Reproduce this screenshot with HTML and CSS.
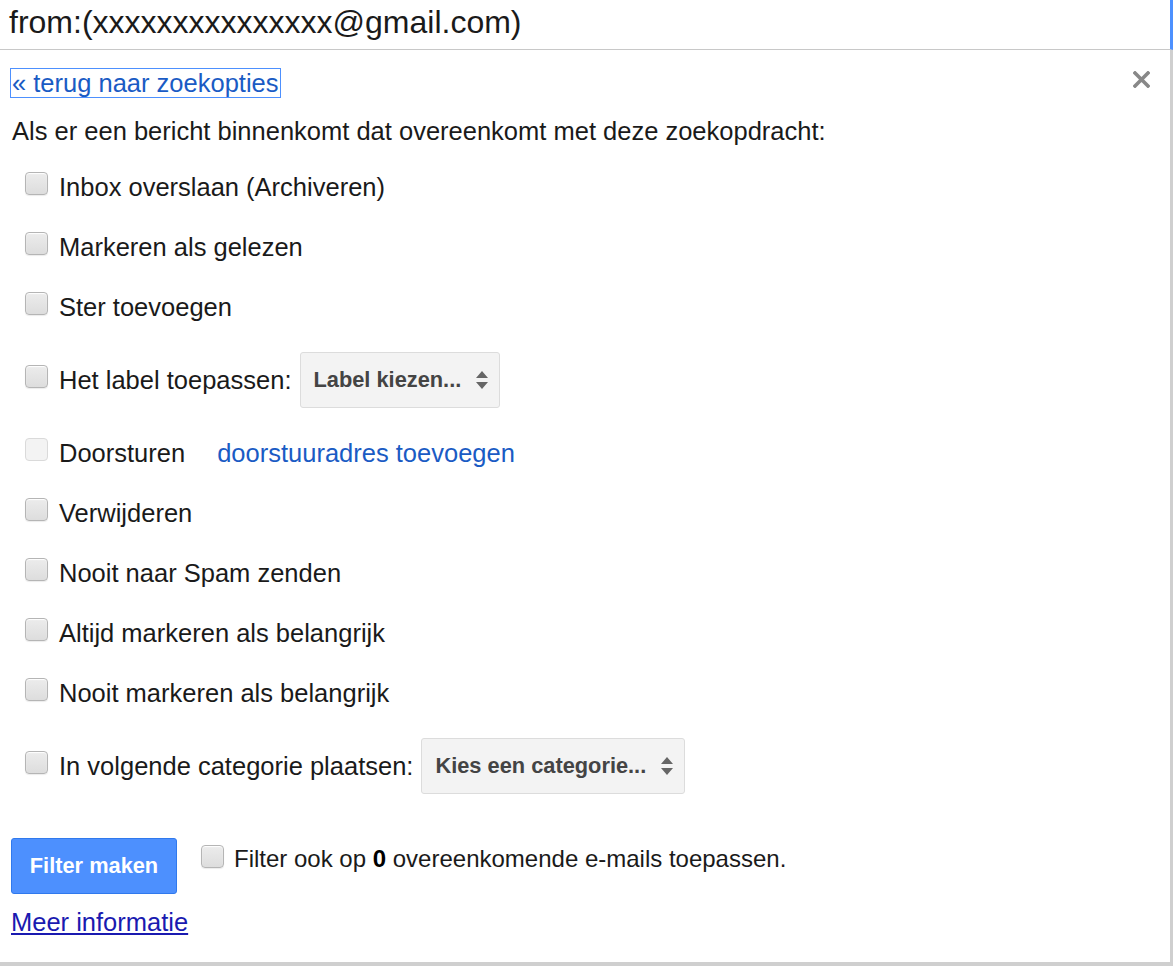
FILE: index.html
```html
<!DOCTYPE html>
<html lang="nl">
<head>
<meta charset="utf-8">
<title>Filter maken</title>
<link rel="stylesheet" href="styles.css">
</head>
<body>
<div class="page">
  <div class="search">from:(xxxxxxxxxxxxxxx@gmail.com)</div>
  <div class="panel">
    <div class="top">
      <a class="back" href="#">« terug naar zoekopties</a>
      <svg class="close" width="17" height="17" viewBox="0 0 17 17" aria-label="Sluiten">
        <path d="M2 2 L15 15 M15 2 L2 15" stroke="#888" stroke-width="3.6" stroke-linecap="square"/>
      </svg>
    </div>
    <p class="intro">Als er een bericht binnenkomt dat overeenkomt met deze zoekopdracht:</p>
    <ul class="options">
      <li class="opt"><span class="cb"></span><span class="lbl">Inbox overslaan (Archiveren)</span></li>
      <li class="opt"><span class="cb"></span><span class="lbl">Markeren als gelezen</span></li>
      <li class="opt"><span class="cb"></span><span class="lbl">Ster toevoegen</span></li>
      <li class="opt tall"><span class="cb"></span><span class="lbl">Het label toepassen:</span>
        <span class="select label-select"><span>Label kiezen...</span>
          <svg class="arrows" width="14" height="20" viewBox="0 0 14 20"><path d="M7 1 L13 8 L1 8 Z M1 12 L13 12 L7 19 Z" fill="#666"/></svg>
        </span>
      </li>
      <li class="opt"><span class="cb disabled"></span><span class="lbl">Doorsturen</span><a class="fwd" href="#">doorstuuradres toevoegen</a></li>
      <li class="opt"><span class="cb"></span><span class="lbl">Verwijderen</span></li>
      <li class="opt"><span class="cb"></span><span class="lbl">Nooit naar Spam zenden</span></li>
      <li class="opt"><span class="cb"></span><span class="lbl">Altijd markeren als belangrijk</span></li>
      <li class="opt"><span class="cb"></span><span class="lbl">Nooit markeren als belangrijk</span></li>
      <li class="opt tall"><span class="cb"></span><span class="lbl">In volgende categorie plaatsen:</span>
        <span class="select cat-select"><span>Kies een categorie...</span>
          <svg class="arrows" width="14" height="20" viewBox="0 0 14 20"><path d="M7 1 L13 8 L1 8 Z M1 12 L13 12 L7 19 Z" fill="#666"/></svg>
        </span>
      </li>
    </ul>
    <div class="actions">
      <button class="btn">Filter maken</button>
      <span class="cb small"></span>
      <span class="apply">Filter ook op <b>0</b> overeenkomende e-mails toepassen.</span>
    </div>
    <a class="more" href="#">Meer informatie</a>
  </div>
</div>
</body>
</html>
```

FILE: styles.css
```css
html, body {
  margin: 0;
  padding: 0;
  background: #fff;
}

.page {
  width: 1173px;
  height: 966px;
  display: flex;
  flex-direction: column;
  font-family: "Liberation Sans", Arial, sans-serif;
  color: #1a1a1a;
}

.search {
  box-sizing: border-box;
  height: 50px;
  border-bottom: 1px solid #c8c8c8;
  border-right: 3px solid #4d90fe;
  padding-left: 9px;
  font-size: 32px;
  line-height: 44px;
  color: #1a1a1a;
}

.panel {
  flex: 1;
  box-sizing: border-box;
  border-right: 3px solid #cfcfcf;
  border-bottom: 4px solid #cfcfcf;
  padding: 18px 20px 0 10px;
  display: flex;
  flex-direction: column;
  align-items: flex-start;
}

.top {
  align-self: stretch;
  display: flex;
  justify-content: space-between;
  align-items: flex-start;
}

.back {
  font-size: 25.5px;
  line-height: 28px;
  color: #1a5bc4;
  text-decoration: none;
  border: 1px solid #4d90fe;
  padding: 0 1px;
}

.close {
  margin-top: 3px;
}

.intro {
  margin: 18px 0 0 2px;
  font-size: 25.5px;
  line-height: 30px;
}

.options {
  list-style: none;
  margin: 11px 0 0 0;
  padding: 0 0 0 15px;
}

.opt {
  height: 60px;
  display: flex;
  align-items: center;
}

.opt.tall {
  height: 86px;
}

.cb {
  box-sizing: border-box;
  width: 23px;
  height: 23px;
  border: 1px solid #b5b5b5;
  border-radius: 4px;
  background: linear-gradient(#ececec, #dddddd);
  box-shadow: inset 0 1px 1px #fff, 0 1px 1px rgba(0,0,0,0.08);
  margin: 0 11px 8px 0;
  flex: none;
}

.cb.disabled {
  border-color: #dadada;
  background: #f3f3f3;
  box-shadow: none;
}

.lbl {
  font-size: 25.5px;
  line-height: 30px;
}

.select {
  box-sizing: border-box;
  height: 56px;
  display: inline-flex;
  align-items: center;
  justify-content: space-between;
  background: #f3f3f3;
  border: 1px solid #dcdcdc;
  border-radius: 3px;
  padding: 0 10px 0 13px;
  font-size: 21.8px;
  font-weight: bold;
  color: #444;
  margin-left: 8px;
}

.label-select {
  width: 200px;
}

.cat-select {
  width: 264px;
}

.arrows {
  flex: none;
}

.fwd {
  margin-left: 32px;
  font-size: 25.5px;
  line-height: 30px;
  color: #1a5bc4;
  text-decoration: none;
}

.actions {
  display: flex;
  align-items: flex-start;
  margin: 29px 0 0 1px;
}

.btn {
  box-sizing: border-box;
  width: 166px;
  height: 56px;
  background: #4d90fe;
  border: 1px solid #3079ed;
  border-radius: 3px;
  color: #fff;
  font-family: "Liberation Sans", Arial, sans-serif;
  font-weight: bold;
  font-size: 21.8px;
  padding: 0;
  margin: 0 24px 0 0;
}

.cb.small {
  margin: 7px 10px 0 0;
}

.apply {
  font-size: 24px;
  line-height: 30px;
  margin-top: 6px;
}

.apply b {
  color: #000;
}

.more {
  margin: 13px 0 0 1px;
  font-size: 25.5px;
  line-height: 30px;
  color: #1a1ab0;
  text-decoration: underline;
}
```
